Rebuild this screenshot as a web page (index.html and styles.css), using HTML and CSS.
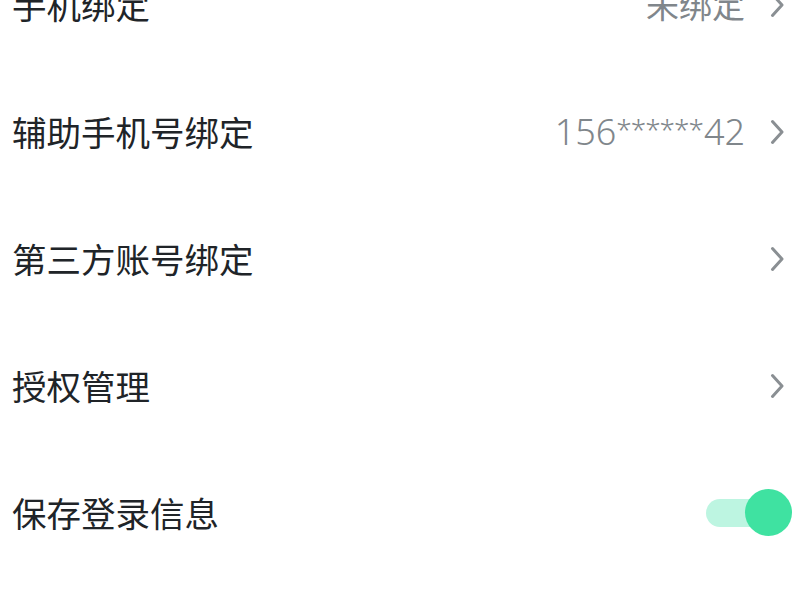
FILE: index.html
```html
<!DOCTYPE html>
<html lang="zh-CN">
<head>
<meta charset="utf-8">
<title>账号与安全</title>
<link rel="stylesheet" href="styles.css">
</head>
<body>
<ul class="settings">
  <li class="row">
    <span class="label">手机绑定</span>
    <span class="right">
      <span class="value">未绑定</span>
      <svg class="chev" viewBox="0 0 14 26" width="14" height="26"><polyline points="2.5,2.5 12,13 2.5,23.5"/></svg>
    </span>
  </li>
  <li class="row">
    <span class="label">辅助手机号绑定</span>
    <span class="right">
      <span class="value num">156<span class="stars">******</span>42</span>
      <svg class="chev" viewBox="0 0 14 26" width="14" height="26"><polyline points="2.5,2.5 12,13 2.5,23.5"/></svg>
    </span>
  </li>
  <li class="row">
    <span class="label">第三方账号绑定</span>
    <span class="right">
      <svg class="chev" viewBox="0 0 14 26" width="14" height="26"><polyline points="2.5,2.5 12,13 2.5,23.5"/></svg>
    </span>
  </li>
  <li class="row">
    <span class="label">授权管理</span>
    <span class="right">
      <svg class="chev" viewBox="0 0 14 26" width="14" height="26"><polyline points="2.5,2.5 12,13 2.5,23.5"/></svg>
    </span>
  </li>
  <li class="row row-toggle">
    <span class="label">保存登录信息</span>
    <span class="toggle on"><span class="track"></span><span class="knob"></span></span>
  </li>
</ul>
</body>
</html>
```

FILE: styles.css
```css
html, body {
  margin: 0;
  padding: 0;
  background: #ffffff;
  overflow: hidden;
}

body {
  font-family: "Noto Sans CJK SC", "Noto Sans", sans-serif;
  color: #1f2327;
}

.settings {
  list-style: none;
  margin: -59px 0 0 0;
  padding: 0;
}

.row {
  height: 127px;
  display: flex;
  align-items: center;
  justify-content: space-between;
  padding: 0 16px 0 12px;
}

.label {
  font-size: 34.5px;
  line-height: 1;
  font-weight: 400;
  color: #202428;
}

.right {
  display: flex;
  align-items: center;
  gap: 25px;
}

.value {
  font-size: 33px;
  line-height: 1;
  color: #80868b;
  font-weight: 400;
}

.value.num {
  font-family: "Noto Sans", "Open Sans", sans-serif;
  font-weight: 300;
  font-size: 36px;
}

.stars {
  font-size: 28px;
  letter-spacing: -1px;
  margin-right: 1px;
  vertical-align: 5px;
}

.chev {
  display: block;
  fill: none;
  stroke: #8a8f93;
  stroke-width: 3;
  stroke-linecap: round;
  stroke-linejoin: round;
}

.row-toggle {
  padding-right: 8px;
}

.toggle {
  position: relative;
  display: block;
  width: 86px;
  height: 47px;
}

.toggle .track {
  position: absolute;
  left: 0;
  top: 10px;
  width: 74px;
  height: 28px;
  border-radius: 14px;
  background: #bdf5e1;
}

.toggle .knob {
  position: absolute;
  right: 0;
  top: 0;
  width: 47px;
  height: 47px;
  border-radius: 50%;
  background: #3fe2a1;
}
```
